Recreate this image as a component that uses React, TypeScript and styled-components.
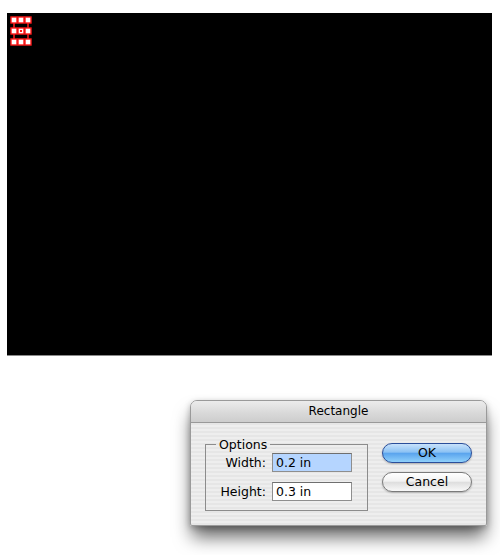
import { FC } from "react";
import styled, { createGlobalStyle } from "styled-components";

const GlobalStyle = createGlobalStyle`
  html, body {
    margin: 0;
    padding: 0;
    background: #fff;
  }
  body {
    font-family: "DejaVu Sans", "Liberation Sans", sans-serif;
    font-size: 12px;
    color: #000;
  }
`;

const handles = [
  [14, 20],
  [21, 20],
  [28, 20],
  [14, 31],
  [28, 31],
  [14, 42],
  [21, 42],
  [28, 42],
];

const Selection: FC = () => (
  <SelectionSvg width="40" height="50" viewBox="0 0 40 50">
    <rect x="14" y="20" width="14" height="22" fill="none" stroke="#ff2020" strokeWidth="1.5" />
    {handles.map(([x, y]) => (
      <rect
        key={`${x}-${y}`}
        x={x - 3}
        y={y - 3}
        width="6"
        height="6"
        fill="#fff"
        stroke="#ff1a1a"
        strokeWidth="1.4"
      />
    ))}
    <rect x="18" y="28" width="6" height="6" fill="#fff" stroke="#ff1a1a" strokeWidth="1.4" />
    <rect x="20" y="30" width="2" height="2" fill="#ff1a1a" />
  </SelectionSvg>
);

export default function App() {
  return (
    <>
      <GlobalStyle />
      <Page>
        <Canvas>
          <Selection />
        </Canvas>
        <Dialog>
          <TitleBar>Rectangle</TitleBar>
          <DialogBody>
            <OptionsGroup>
              <legend>Options</legend>
              <FieldGrid>
                <FieldLabel>Width:</FieldLabel>
                <FieldInput $selected>0.2 in</FieldInput>
                <FieldLabel>Height:</FieldLabel>
                <FieldInput>0.3 in</FieldInput>
              </FieldGrid>
            </OptionsGroup>
            <ButtonColumn>
              <PillButton $primary>OK</PillButton>
              <PillButton>Cancel</PillButton>
            </ButtonColumn>
          </DialogBody>
        </Dialog>
      </Page>
    </>
  );
}

const Page = styled.div`
  display: flex;
  flex-direction: column;
  align-items: flex-start;
  padding: 13px 0 0 7px;
  height: 555px;
  box-sizing: border-box;
`;

const Canvas = styled.div`
  position: relative;
  width: 485px;
  height: 342px;
  background: #000;
  border-bottom: 1px solid #8a8a8a;
`;

const SelectionSvg = styled.svg`
  position: absolute;
  left: -7px;
  top: -13px;
`;

const Dialog = styled.div`
  margin: 44px 0 0 183px;
  width: 297px;
  height: 126px;
  box-sizing: border-box;
  border: 1px solid #9a9a9a;
  border-radius: 7px 7px 2px 2px;
  overflow: hidden;
  background: repeating-linear-gradient(
    to bottom,
    #eeeeee 0px,
    #eeeeee 2px,
    #e6e6e6 2px,
    #e6e6e6 4px
  );
  box-shadow: 0 13px 18px -2px rgba(0, 0, 0, 0.6), 0 2px 6px rgba(0, 0, 0, 0.25);
`;

const TitleBar = styled.div`
  height: 21px;
  line-height: 21px;
  text-align: center;
  font-size: 12px;
  background: linear-gradient(to bottom, #ececec 0%, #d8d8d8 60%, #cdcdcd 100%);
  border-bottom: 1px solid #999;
`;

const DialogBody = styled.div`
  display: flex;
  align-items: flex-start;
  gap: 14px;
  padding: 14px 0 0 14px;
`;

const OptionsGroup = styled.fieldset`
  margin: 0;
  width: 163px;
  box-sizing: border-box;
  padding: 1px 14px 9px 0;
  border: 1px solid #8c8c8c;
  & legend {
    margin-left: 10px;
    padding: 0 3px;
    line-height: 15px;
    font-size: 12.5px;
  }
`;

const FieldGrid = styled.div`
  display: grid;
  grid-template-columns: 60px 80px;
  column-gap: 6px;
  row-gap: 10px;
  align-items: center;
`;

const FieldLabel = styled.div`
  text-align: right;
  font-size: 12.5px;
`;

const FieldInput = styled.div<{ $selected?: boolean }>`
  height: 19px;
  box-sizing: border-box;
  padding: 0 3px;
  line-height: 17px;
  font-size: 12.5px;
  border: 1px solid #8e8e8e;
  border-top-color: #6f6f6f;
  background: ${(p) => (p.$selected ? "#b5d5ff" : "#fff")};
`;

const ButtonColumn = styled.div`
  display: flex;
  flex-direction: column;
  gap: 9px;
  margin-top: 6px;
`;

const PillButton = styled.div<{ $primary?: boolean }>`
  width: 90px;
  height: 20px;
  box-sizing: border-box;
  border-radius: 10px;
  text-align: center;
  line-height: 18px;
  font-size: 12.5px;
  border: 1px solid ${(p) => (p.$primary ? "#2a4e9a" : "#7a7a7a")};
  background: ${(p) =>
    p.$primary
      ? "linear-gradient(to bottom, #c8e2fb 0%, #8cc2f4 45%, #5aa4ee 52%, #8fd0fb 100%)"
      : "linear-gradient(to bottom, #ffffff 0%, #f2f2f2 45%, #dedede 52%, #f8f8f8 100%)"};
  box-shadow: 0 1px 2px rgba(0, 0, 0, 0.25);
`;
